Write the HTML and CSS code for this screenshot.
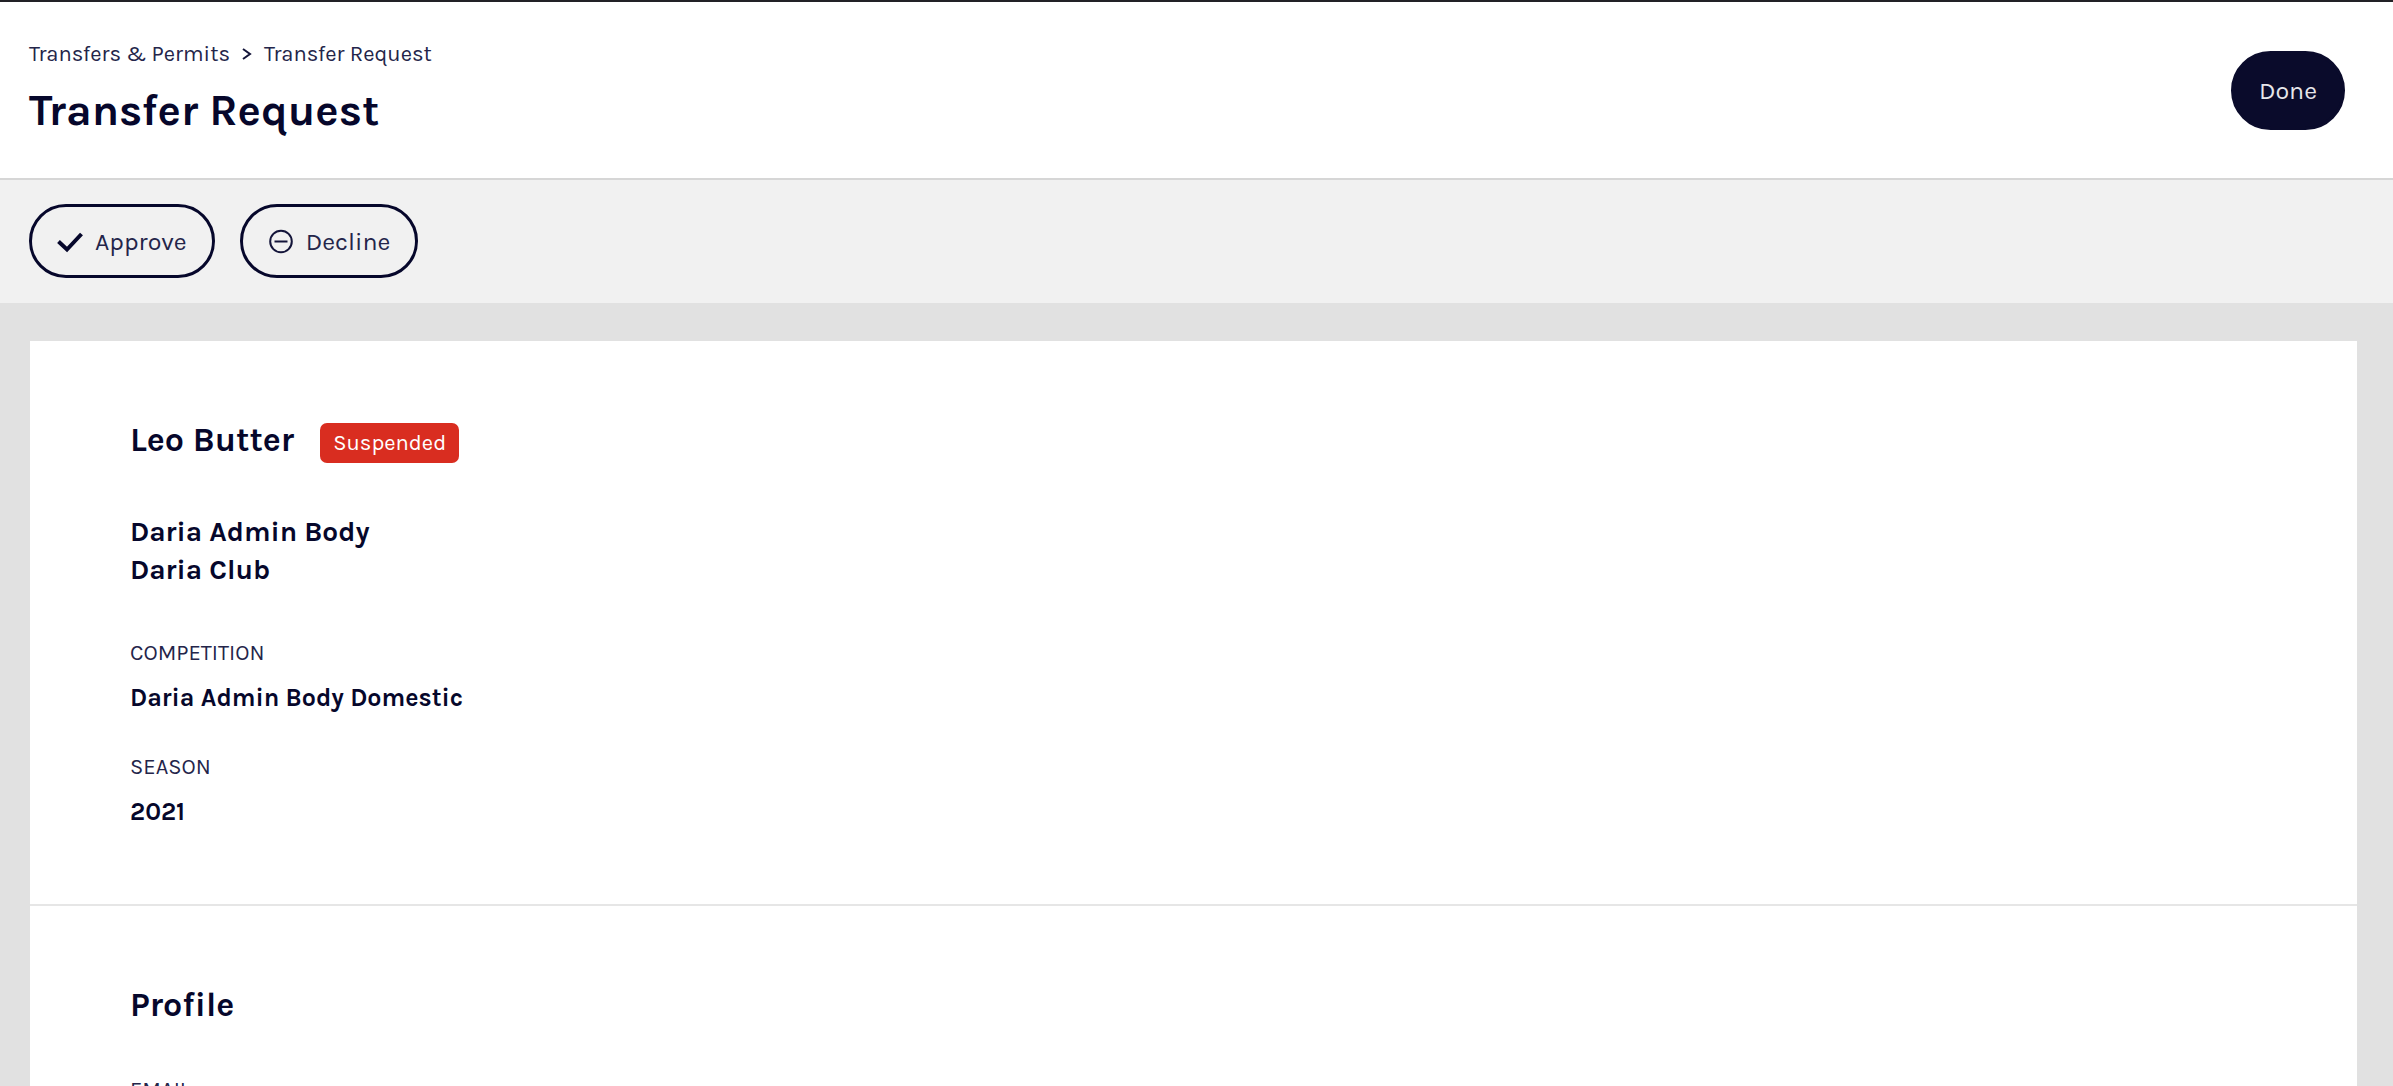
FILE: index.html
```html
<!doctype html>
<html lang="en">
    <head>
        <title>Transfer Request</title>
        <meta charset="utf-8" />
        <meta name="viewport" content="width=device-width" />
        <link rel="stylesheet" href="styles.css">
    </head>
    <body>
        <header class="page-header">
            <div>
                <nav class="breadcrumb">
                    <a href="#">Transfers &amp; Permits</a>
                    <svg class="sep" viewBox="0 0 10 14"><path d="M1 2l7 5-7 5" /></svg>
                    <a href="#">Transfer Request</a>
                </nav>
                <h1>Transfer Request</h1>
            </div>
            <button type="button" class="btn btn-primary">Done</button>
        </header>
        <div class="toolbar">
            <button type="button" class="btn">
                <svg class="icon icon-check" viewBox="0 0 26 26"><path d="M1.5 13.5l8.5 8L24.5 6" /></svg>
                Approve
            </button>
            <button type="button" class="btn">
                <svg class="icon" viewBox="0 0 26 26"><circle cx="13" cy="13.5" r="10.8" /><path d="M6.5 13.5h13" /></svg>
                Decline
            </button>
        </div>
        <main class="content">
            <div class="card">
                <section>
                    <div class="name">
                        <h2>Leo Butter</h2>
                        <span class="badge">Suspended</span>
                    </div>
                    <h3>Daria Admin Body<br>Daria Club</h3>
                    <dl>
                        <dt>COMPETITION</dt>
                        <dd>Daria Admin Body Domestic</dd>
                        <dt>SEASON</dt>
                        <dd>2021</dd>
                    </dl>
                </section>
                <section>
                    <div class="name">
                        <h2>Profile</h2>
                    </div>
                    <dl>
                        <dt>EMAIL</dt>
                    </dl>
                </section>
            </div>
        </main>
    </body>
</html>
```

FILE: styles.css
```css
* {
    box-sizing: border-box;
}

html {
    height: 100%;
}

body {
    display: flex;
    flex-direction: column;
    height: 100%;
    margin: 0;
    overflow: hidden;
    font-family: Karla, Roboto, sans-serif;
    color: #06072b;
    background-color: #e1e1e1;
}

h1, h2, h3, dl, dd {
    margin: 0;
}

svg {
    fill: none;
    stroke: #14153a;
}

.page-header {
    display: flex;
    flex: none;
    align-items: center;
    justify-content: space-between;
    padding: 37px 48px 37px 29px;
    background-color: white;
    border-top: 2px solid #222126;
    border-bottom: 2px solid #d6d6d6;
}

.breadcrumb {
    display: flex;
    align-items: center;
    gap: 12px;
    font-size: 22px;
    line-height: 30px;
}

.breadcrumb a {
    color: #24254a;
    text-decoration: none;
}

.sep {
    width: 10px;
    height: 14px;
    stroke-width: 2;
}

h1 {
    margin-top: 12px;
    font-size: 44px;
    line-height: 60px;
}

.btn {
    display: flex;
    align-items: center;
    gap: 12px;
    height: 74px;
    padding: 0 25px;
    font-family: inherit;
    font-size: 25px;
    color: #24254a;
    background-color: transparent;
    border: 3px solid #06072b;
    border-radius: 37px;
}

.btn-primary {
    height: 79px;
    color: #e6e6ea;
    background-color: #0a0b2b;
    border-color: #0a0b2b;
    border-radius: 40px;
}

.toolbar {
    display: flex;
    flex: none;
    gap: 25px;
    padding: 24px 29px 25px;
    background-color: #f1f1f1;
}

.icon {
    width: 26px;
    height: 26px;
    stroke-width: 2;
}

.icon-check {
    stroke: #06072b;
    stroke-width: 4;
}

.content {
    flex: 1;
    padding: 38px 36px 0 30px;
    overflow: hidden;
}

.card {
    background-color: white;
}

.card section {
    padding: 76px 100px 74px;
}

.card section + section {
    border-top: 2px solid #e6e6e6;
}

.name {
    display: flex;
    align-items: center;
    gap: 26px;
    margin-bottom: 46px;
}

h2 {
    font-size: 34px;
    line-height: 46px;
}

.badge {
    margin-top: 6px;
    padding: 0 13px;
    font-size: 22px;
    line-height: 40px;
    color: white;
    background-color: #d92d20;
    border-radius: 7px;
}

h3 {
    margin-bottom: 48px;
    padding-top: 4px;
    font-size: 28px;
    line-height: 38px;
}

dt {
    font-size: 22px;
    line-height: 32px;
    color: #24254a;
}

dd {
    margin: 11px 0 35px;
    font-size: 25px;
    font-weight: bold;
    line-height: 36px;
}

dd:last-child {
    margin-bottom: 0;
}
```
